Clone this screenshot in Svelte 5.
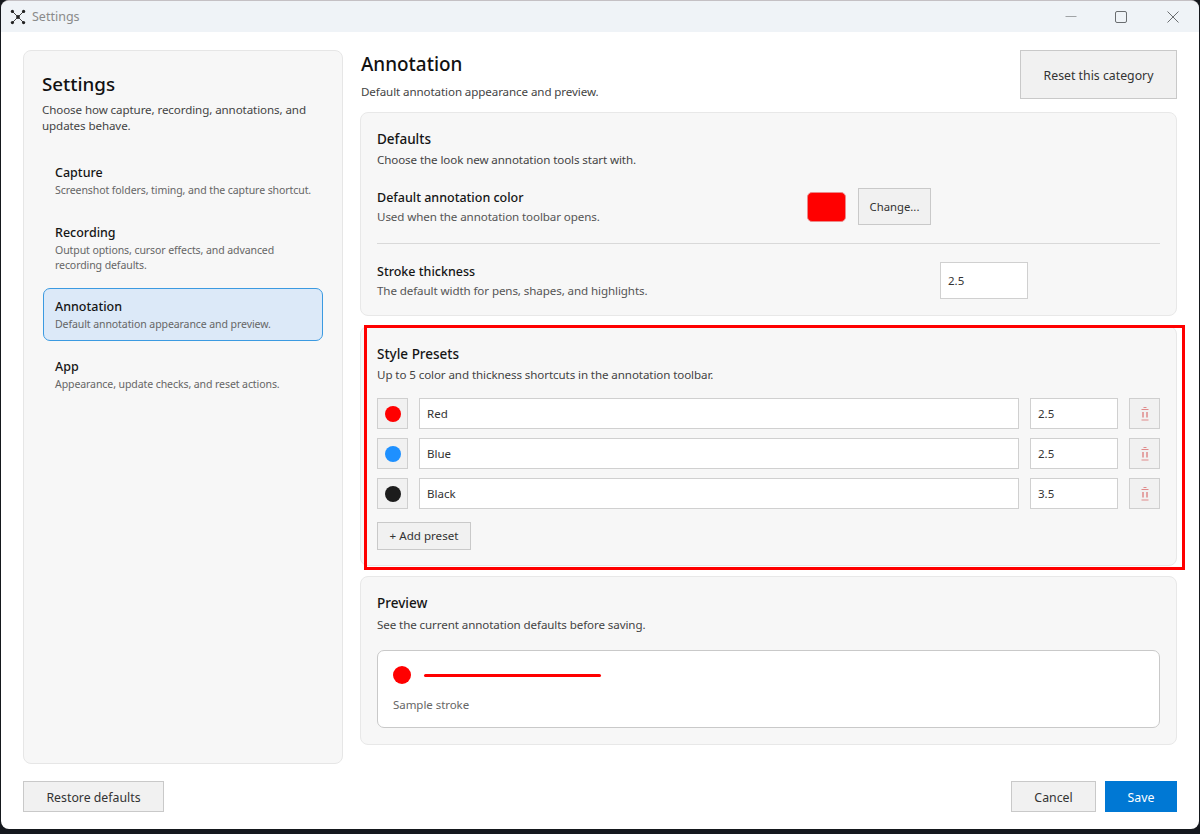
<script>
  const nav = [
    { t: 'Capture', d: 'Screenshot folders, timing, and the capture shortcut.' },
    { t: 'Recording', d: 'Output options, cursor effects, and advanced recording defaults.' },
    { t: 'Annotation', d: 'Default annotation appearance and preview.', active: true },
    { t: 'App', d: 'Appearance, update checks, and reset actions.' }
  ];
  const presets = [
    { name: 'Red', color: '#ff0000', w: '2.5' },
    { name: 'Blue', color: '#1e90ff', w: '2.5' },
    { name: 'Black', color: '#1c1c1c', w: '3.5' }
  ];
</script>

<div class="window">
  <header class="titlebar">
    <svg class="logo" width="16" height="16" viewBox="0 0 16 16">
      <path d="M3 3L13 13M13 3L3 13" stroke="#444" stroke-width="1" />
      <circle cx="8" cy="8" r="1.9" fill="#222" />
      <circle cx="2.4" cy="2.4" r="1.6" fill="#222" />
      <circle cx="13.6" cy="2.4" r="1.6" fill="#222" />
      <circle cx="2.4" cy="13.6" r="1.6" fill="#222" />
      <circle cx="13.6" cy="13.6" r="1.6" fill="#222" />
    </svg>
    <span class="wintitle">Settings</span>
    <div class="controls">
      <svg class="min" width="12" height="12" viewBox="0 0 12 12"><path d="M0.5 5.5H11.5" stroke="#a0a3a6" stroke-width="1" /></svg>
      <svg class="max" width="12" height="12" viewBox="0 0 12 12"><rect x="0.5" y="0.5" width="11" height="11" rx="1.5" fill="none" stroke="#6a6d70" stroke-width="1" /></svg>
      <svg class="close" width="12" height="12" viewBox="0 0 12 12"><path d="M0.5 0.5L11.5 11.5M11.5 0.5L0.5 11.5" stroke="#6a6d70" stroke-width="1" /></svg>
    </div>
  </header>

  <div class="body">
    <div class="columns">
      <aside class="sidebar">
        <h1>Settings</h1>
        <p class="lead">Choose how capture, recording, annotations, and updates behave.</p>
        <nav>
          {#each nav as n}
            <div class="navitem" class:active={n.active}>
              <div class="navt">{n.t}</div>
              <div class="navd">{n.d}</div>
            </div>
          {/each}
        </nav>
      </aside>

      <main>
        <div class="head">
          <div class="headtext">
            <h2>Annotation</h2>
            <p class="headsub">Default annotation appearance and preview.</p>
          </div>
          <button class="btn reset">Reset this category</button>
        </div>

        <section class="card defaults">
          <h3>Defaults</h3>
          <p class="sub">Choose the look new annotation tools start with.</p>
          <div class="row colorrow">
            <div class="rowtext">
              <div class="rowt">Default annotation color</div>
              <div class="rowd">Used when the annotation toolbar opens.</div>
            </div>
            <div class="swatch"></div>
            <button class="btn change">Change...</button>
          </div>
          <div class="rule"></div>
          <div class="row strokerow">
            <div class="rowtext">
              <div class="rowt">Stroke thickness</div>
              <div class="rowd">The default width for pens, shapes, and highlights.</div>
            </div>
            <div class="input num big">2.5</div>
          </div>
        </section>

        <section class="card presets">
          <h3>Style Presets</h3>
          <p class="sub">Up to 5 color and thickness shortcuts in the annotation toolbar.</p>
          <div class="plist">
            {#each presets as p}
              <div class="preset">
                <button class="dotbtn" aria-label="Pick color"><span class="dot" style:background={p.color}></span></button>
                <div class="input name">{p.name}</div>
                <div class="input num">{p.w}</div>
                <button class="dotbtn trash" aria-label="Delete">
                  <svg width="8" height="14" viewBox="0 0 8 14">
                    <path d="M2.5 0.5H5.5M0.5 2.5H7.5M0.5 13H7.5" stroke="#e08a8a" stroke-width="1" fill="none" />
                    <path d="M2 5V10.5M6 5V10.5" stroke="#e08a8a" stroke-width="1.5" fill="none" />
                  </svg>
                </button>
              </div>
            {/each}
          </div>
          <button class="btn add">+ Add preset</button>
        </section>

        <section class="card preview">
          <h3>Preview</h3>
          <p class="sub">See the current annotation defaults before saving.</p>
          <div class="pbox">
            <div class="pline"><span class="pdot"></span><span class="pstroke"></span></div>
            <div class="plabel">Sample stroke</div>
          </div>
        </section>
      </main>
    </div>

    <footer>
      <button class="btn restore">Restore defaults</button>
      <div class="right">
        <button class="btn cancel">Cancel</button>
        <button class="btn save">Save</button>
      </div>
    </footer>
  </div>
</div>
<div class="callout"></div>

<style>
  :global(body) {
    margin: 0;
    background: #15181d;
    overflow: hidden;
  }
  * { box-sizing: border-box; }
  .window {
    width: 1198px;
    height: 829px;
    margin-left: 1px;
    background: #fff;
    border-radius: 8px;
    overflow: hidden;
    font-family: "Noto Sans", "Open Sans", sans-serif;
    color: #1a1a1a;
    font-size: 12px;
    border-top: 1px solid #c4c0c4;
  }
  h1, h2, h3, p { margin: 0; }
  button { font-family: inherit; }
  .titlebar {
    height: 31px;
    background: #eff3f7;
    display: flex;
    align-items: center;
    padding-left: 9px;
  }
  .wintitle { margin-left: 6px; font-size: 12.5px; color: #8a8a8a; }
  .controls { margin-left: auto; display: flex; padding-right: 20px; }
  .max { margin-left: 38px; }
  .close { margin-left: 40px; }
  .body { padding: 18px 22px 0 22px; }
  .columns { display: flex; gap: 17px; height: 714px; }
  .sidebar {
    width: 320px;
    background: #f7f7f7;
    border: 1px solid #e6e6e6;
    border-radius: 8px;
    padding: 21px 19px 0 18px;
  }
  h1 { font-size: 18.8px; font-weight: 500; line-height: 24px; color: #111; }
  .lead { margin-top: 6px; font-size: 11.6px; letter-spacing: -0.1px; line-height: 16px; color: #444; }
  nav { margin-top: 20px; margin-left: 1px; display: flex; flex-direction: column; gap: 7px; }
  .navitem { padding: 9px 8px 7px 11px; border: 1px solid transparent; border-radius: 7px; min-height: 53px; }
  .navitem.active { background: #dce9f8; border-color: #3b9ae1; }
  .navt { font-size: 12.5px; font-weight: 500; line-height: 17px; color: #151515; }
  .navd { margin-top: 2px; font-size: 10.55px; letter-spacing: -0.1px; line-height: 15px; color: #666; }
  main { flex: 1; min-width: 0; display: flex; flex-direction: column; }
  .head { display: flex; justify-content: space-between; height: 62px; }
  .headtext { padding-left: 1px; }
  h2 { font-size: 18.9px; font-weight: 500; line-height: 28px; color: #111; }
  .headsub { margin-top: 6px; font-size: 11.6px; letter-spacing: -0.1px; line-height: 16px; color: #444; }
  .btn {
    background: #f1f1f1;
    border: 1px solid #c9c9c9;
    border-radius: 0;
    font-size: 12.3px;
    color: #333;
    padding: 1px 0 0;
  }
  .reset { width: 157px; height: 49px; }
  .card {
    background: #f7f7f7;
    border: 1px solid #e8e8e8;
    border-radius: 8px;
    padding: 17px 16px 16px;
  }
  h3 { font-size: 13.5px; font-weight: 500; line-height: 18px; color: #151515; }
  .sub { margin-top: 4px; font-size: 11.6px; letter-spacing: -0.1px; line-height: 16px; color: #444; }
  .defaults { height: 204px; }
  .row { display: flex; align-items: center; }
  .rowtext { flex: 1; }
  .rowt { font-size: 12.5px; font-weight: 500; line-height: 17px; color: #151515; }
  .rowd { margin-top: 3px; font-size: 11.6px; letter-spacing: -0.1px; line-height: 16px; color: #555; }
  .colorrow { margin-top: 20px; height: 37px; padding-right: 229px; }
  .swatch { width: 39px; height: 30px; background: #ff0000; border: 1px solid #eb8a8a; border-radius: 5px; margin-right: 12px; }
  .change { width: 73px; height: 37px; font-size: 11.3px; padding: 0; }
  .rule { height: 1px; background: #d9d9d9; margin-top: 18px; }
  .strokerow { margin-top: 18px; height: 37px; padding-right: 132px; }
  .input {
    background: #fff;
    border: 1px solid #d0d0d0;
    font-size: 11.5px;
    color: #333;
    display: flex;
    align-items: center;
    padding-left: 7px;
  }
  .num { width: 88px; height: 31px; }
  .big { height: 37px; }
  .presets { margin-top: 10px; height: 240px; padding-top: 18px; }
  .plist { margin-top: 15px; display: flex; flex-direction: column; gap: 9px; }
  .preset { display: flex; gap: 11px; }
  .dotbtn {
    width: 31px; height: 31px;
    background: #f1f1f1;
    border: 1px solid #cfcfcf;
    border-radius: 0;
    padding: 0;
    display: flex;
    align-items: center;
    justify-content: center;
  }
  .dot { width: 16px; height: 16px; border-radius: 50%; }
  .name { flex: 1; }
  .add { margin-top: 13px; width: 94px; height: 28px; font-size: 11.6px; display: block; padding: 0 0 1px; }
  .preview { margin-top: 10px; height: 169px; }
  .preview .sub { margin-top: 5px; }
  .pbox {
    margin-top: 17px;
    height: 78px;
    background: #fff;
    border: 1px solid #c9c9c9;
    border-radius: 7px;
    padding: 15px;
  }
  .pline { display: flex; align-items: center; gap: 13px; height: 18px; }
  .pdot { width: 18px; height: 18px; border-radius: 50%; background: #ff0000; }
  .pstroke { width: 177px; height: 3px; border-radius: 2px; background: #ff0000; }
  .plabel { margin-top: 13px; font-size: 11.5px; letter-spacing: -0.05px; line-height: 16px; color: #666; }
  footer { margin-top: 17px; display: flex; justify-content: space-between; }
  .restore { width: 141px; height: 31px; }
  .right { display: flex; gap: 9px; }
  .cancel { width: 85px; height: 31px; }
  .save { width: 72px; height: 31px; background: #0078d4; border-color: #0078d4; color: #fff; }
  .callout {
    position: absolute;
    left: 364px; top: 325px;
    width: 821px; height: 245px;
    border: 3px solid #ff0000;
    pointer-events: none;
  }
</style>
